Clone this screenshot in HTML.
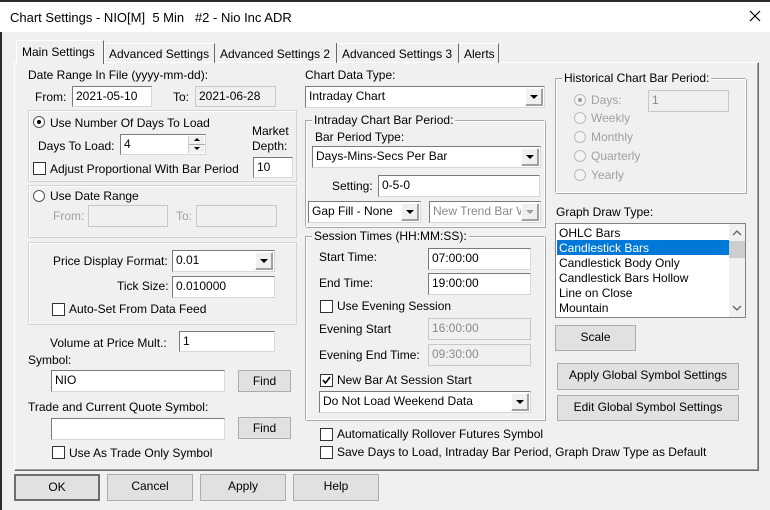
<!DOCTYPE html>
<html><head><meta charset="utf-8"><style>
*{box-sizing:border-box;margin:0;padding:0}
body{width:770px;height:510px;background:#f0f0f0;font-family:"Liberation Sans",sans-serif;font-size:12px;color:#000;position:relative;overflow:hidden}
.a{position:absolute;white-space:nowrap;line-height:14px}
.t{position:absolute;white-space:nowrap;line-height:14px}
.g{color:#a0a0a0}
.in{position:absolute;background:#fff;border:1px solid #7a7a7a;border-right-color:#d8d8d8;border-bottom-color:#d8d8d8;padding:2px 3px;line-height:15px;white-space:nowrap;overflow:hidden}
.dis{background:#f0f0f0;border-color:#c8c8c8;color:#8a8a8a}
.sel{position:absolute;background:#fff;border:1px solid #7a7a7a;border-right-color:#d8d8d8;border-bottom-color:#d8d8d8;padding:2px 3px;line-height:15px;white-space:nowrap;overflow:hidden}
.sel::after{content:"";position:absolute;right:1px;top:1px;bottom:1px;width:16px;background:#f0f0f0;border:1px solid #a0a0a0;border-top-color:#fff;border-left-color:#fff;box-shadow:inset -1px -1px 0 #a0a0a0}
.sel::before{content:"";position:absolute;right:6px;top:8px;border-left:4px solid transparent;border-right:4px solid transparent;border-top:4px solid #000;z-index:2}
.sel.dis::before{border-top-color:#a0a0a0}
.btn{position:absolute;background:#e1e1e1;border:1px solid #adadad;text-align:center;line-height:22px}
.grp{position:absolute;border:1px solid #d5d5d5;box-shadow:inset 1px 1px 0 #fff}
.grp2{position:absolute;border:1px solid #a8a8a8;border-right-color:#fff;border-bottom-color:#fff;box-shadow:1px 1px 0 #a8a8a8, inset 1px 1px 0 #fff}
.leg{position:absolute;background:#f0f0f0;padding:0 2px;line-height:14px;white-space:nowrap}
.cb{position:absolute;width:13px;height:13px;background:#fff;border:1px solid #333}
.rb{position:absolute;width:12px;height:12px;border-radius:50%;background:#fff;border:1px solid #555}
.rb.on::after{content:"";position:absolute;left:3px;top:3px;width:4px;height:4px;border-radius:50%;background:#000}
.rb.d{border-color:#bbb;background:#f4f4f4}
.rb.d.on::after{background:#999}
</style></head><body>
<div style="position:absolute;left:0;top:0;width:770px;height:2px;background:#2b2b2b"></div>
<div style="position:absolute;left:0;top:2px;width:770px;height:30px;background:#fff"></div>
<div style="position:absolute;left:0;top:32px;width:2px;height:478px;background:#2b2b2b"></div>
<div class="a" style="left:10px;top:10px;font-size:13px;line-height:15px">Chart Settings - NIO[M]&nbsp; 5 Min&nbsp;&nbsp; #2 - Nio Inc ADR</div>
<svg style="position:absolute;left:749px;top:10px" width="12" height="12"><path d="M1 1L11 11M11 1L1 11" stroke="#000" stroke-width="1.2"/></svg>

<!-- panel -->
<div style="position:absolute;left:14px;top:62px;width:745px;height:409px;border:1px solid #fff;border-right:1px solid #696969;border-bottom:1px solid #696969;box-shadow:inset -1px -1px 0 #a0a0a0"></div>
<!-- tabs -->
<div style="position:absolute;left:104px;top:43px;width:111px;height:20px;border:1px solid #fff;border-right-color:#696969;border-bottom:none"></div>
<div style="position:absolute;left:215px;top:43px;width:122px;height:20px;border-right:1px solid #696969;"></div>
<div style="position:absolute;left:337px;top:43px;width:122px;height:20px;border-right:1px solid #696969;border-top:1px solid #fff"></div>
<div style="position:absolute;left:459px;top:43px;width:40px;height:20px;border-right:1px solid #696969;border-top:1px solid #fff"></div>
<div style="position:absolute;left:16px;top:40px;width:88px;height:24px;background:#f0f0f0;border:1px solid #fff;border-right:1px solid #696969;border-bottom:none"></div>
<div class="a" style="left:22px;top:45px">Main Settings</div>
<div class="a" style="left:109px;top:47px">Advanced Settings</div>
<div class="a" style="left:220px;top:47px">Advanced Settings 2</div>
<div class="a" style="left:342px;top:47px">Advanced Settings 3</div>
<div class="a" style="left:464px;top:47px">Alerts</div>

<!-- left -->
<div class="a" style="left:28px;top:68px">Date Range In File (yyyy-mm-dd):</div>
<div class="a" style="left:35px;top:90px">From:</div>
<div class="in" style="left:72px;top:86px;width:80px;height:21px">2021-05-10</div>
<div class="a" style="left:173px;top:90px">To:</div>
<div class="in dis" style="left:195px;top:86px;width:81px;height:21px;color:#000">2021-06-28</div>

<div class="grp" style="left:28px;top:110px;width:269px;height:72px"></div>
<div class="rb on" style="left:33px;top:116px"></div>
<div class="a" style="left:50px;top:116px">Use Number Of Days To Load</div>
<div class="a" style="left:38px;top:139px">Days To Load:</div>
<div class="in" style="left:120px;top:134px;width:86px;height:21px">4</div>
<div style="position:absolute;left:188px;top:136px;width:16px;height:17px;background:#f0f0f0;border-left:1px solid #ccc"><div style="position:absolute;left:5px;top:2px;border-left:3px solid transparent;border-right:3px solid transparent;border-bottom:3px solid #000"></div><div style="position:absolute;left:0;top:8px;width:16px;height:1px;background:#aaa"></div><div style="position:absolute;left:5px;top:11px;border-left:3px solid transparent;border-right:3px solid transparent;border-top:3px solid #000"></div></div>
<div class="a" style="left:252px;top:124px">Market</div>
<div class="a" style="left:252px;top:139px">Depth:</div>
<div class="in" style="left:253px;top:157px;width:40px;height:21px">10</div>
<div class="cb" style="left:33px;top:162px"></div>
<div class="a" style="left:50px;top:162px">Adjust Proportional With Bar Period</div>

<div class="grp" style="left:28px;top:185px;width:269px;height:53px"></div>
<div class="rb" style="left:33px;top:190px"></div>
<div class="a" style="left:50px;top:189px">Use Date Range</div>
<div class="a g" style="left:53px;top:209px">From:</div>
<div class="in dis" style="left:88px;top:205px;width:80px;height:22px"></div>
<div class="a g" style="left:176px;top:209px">To:</div>
<div class="in dis" style="left:196px;top:205px;width:81px;height:22px"></div>

<div class="grp" style="left:28px;top:242px;width:269px;height:83px"></div>
<div class="a" style="left:53px;top:254px">Price Display Format:</div>
<div class="sel" style="left:172px;top:250px;width:103px;height:22px">0.01</div>
<div class="a" style="left:117px;top:279px">Tick Size:</div>
<div class="in" style="left:172px;top:276px;width:103px;height:22px">0.010000</div>
<div class="cb" style="left:52px;top:303px"></div>
<div class="a" style="left:69px;top:302px">Auto-Set From Data Feed</div>

<div class="a" style="left:50px;top:336px">Volume at Price Mult.:</div>
<div class="in" style="left:179px;top:331px;width:96px;height:21px">1</div>
<div class="a" style="left:28px;top:353px">Symbol:</div>
<div class="in" style="left:51px;top:370px;width:174px;height:22px">NIO</div>
<div class="btn" style="left:238px;top:370px;width:53px;height:22px;line-height:20px">Find</div>
<div class="a" style="left:28px;top:400px">Trade and Current Quote Symbol:</div>
<div class="in" style="left:51px;top:418px;width:174px;height:22px"></div>
<div class="btn" style="left:238px;top:417px;width:53px;height:22px;line-height:20px">Find</div>
<div class="cb" style="left:52px;top:446px"></div>
<div class="a" style="left:69px;top:446px">Use As Trade Only Symbol</div>

<!-- middle -->
<div class="a" style="left:305px;top:68px">Chart Data Type:</div>
<div class="sel" style="left:305px;top:86px;width:240px;height:22px">Intraday Chart</div>
<div class="grp2" style="left:305px;top:120px;width:240px;height:107px"></div>
<div class="leg" style="left:312px;top:113px">Intraday Chart Bar Period:</div>
<div class="a" style="left:315px;top:130px">Bar Period Type:</div>
<div class="sel" style="left:312px;top:146px;width:229px;height:22px">Days-Mins-Secs Per Bar</div>
<div class="a" style="left:332px;top:179px">Setting:</div>
<div class="in" style="left:378px;top:175px;width:162px;height:22px">0-5-0</div>
<div class="sel" style="left:308px;top:201px;width:113px;height:22px">Gap Fill - None</div>
<div class="sel dis" style="left:429px;top:201px;width:112px;height:22px;color:#8a8a8a">New Trend Bar W</div>
<div class="grp2" style="left:305px;top:236px;width:240px;height:184px"></div>
<div class="leg" style="left:312px;top:229px">Session Times (HH:MM:SS):</div>
<div class="a" style="left:319px;top:250px">Start Time:</div>
<div class="in" style="left:428px;top:248px;width:103px;height:22px">07:00:00</div>
<div class="a" style="left:319px;top:276px">End Time:</div>
<div class="in" style="left:428px;top:273px;width:103px;height:22px">19:00:00</div>
<div class="cb" style="left:320px;top:300px"></div>
<div class="a" style="left:337px;top:299px">Use Evening Session</div>
<div class="a" style="left:319px;top:322px">Evening Start</div>
<div class="in dis" style="left:428px;top:318px;width:103px;height:22px">16:00:00</div>
<div class="a" style="left:319px;top:348px">Evening End Time:</div>
<div class="in dis" style="left:428px;top:344px;width:103px;height:22px">09:30:00</div>
<div class="cb" style="left:320px;top:374px"><svg width="11" height="11" style="position:absolute;left:0;top:0"><path d="M2 5L4.5 8L9 2" stroke="#000" stroke-width="1.6" fill="none"/></svg></div>
<div class="a" style="left:337px;top:373px">New Bar At Session Start</div>
<div class="sel" style="left:319px;top:391px;width:212px;height:22px">Do Not Load Weekend Data</div>
<div class="cb" style="left:320px;top:428px"></div>
<div class="a" style="left:337px;top:427px">Automatically Rollover Futures Symbol</div>
<div class="cb" style="left:320px;top:446px"></div>
<div class="a" style="left:337px;top:445px">Save Days to Load, Intraday Bar Period, Graph Draw Type as Default</div>

<!-- right -->
<div class="grp2" style="left:555px;top:78px;width:191px;height:115px"></div>
<div class="leg" style="left:562px;top:71px">Historical Chart Bar Period:</div>
<div class="rb d on" style="left:574px;top:94px"></div>
<div class="a g" style="left:591px;top:93px">Days:</div>
<div class="in dis" style="left:648px;top:90px;width:81px;height:22px">1</div>
<div class="rb d" style="left:574px;top:112px"></div><div class="a g" style="left:591px;top:111px">Weekly</div>
<div class="rb d" style="left:574px;top:131px"></div><div class="a g" style="left:591px;top:130px">Monthly</div>
<div class="rb d" style="left:574px;top:150px"></div><div class="a g" style="left:591px;top:149px">Quarterly</div>
<div class="rb d" style="left:574px;top:169px"></div><div class="a g" style="left:591px;top:168px">Yearly</div>
<div class="a" style="left:556px;top:205px">Graph Draw Type:</div>
<div style="position:absolute;left:555px;top:223px;width:191px;height:95px;background:#fff;border:1px solid #828282;overflow:hidden">
<div class="a" style="left:3px;top:2px">OHLC Bars</div>
<div style="position:absolute;left:1px;top:16px;width:172px;height:15px;background:#0078d7"></div>
<div class="a" style="left:3px;top:17px;color:#fff">Candlestick Bars</div>
<div class="a" style="left:3px;top:32px">Candlestick Body Only</div>
<div class="a" style="left:3px;top:47px">Candlestick Bars Hollow</div>
<div class="a" style="left:3px;top:62px">Line on Close</div>
<div class="a" style="left:3px;top:77px">Mountain</div>
<div style="position:absolute;left:173px;top:0;width:17px;height:93px;background:#f0f0f0"></div>
<div style="position:absolute;left:173px;top:17px;width:16px;height:17px;background:#cdcdcd"></div>
<svg style="position:absolute;left:176px;top:5px" width="10" height="8"><path d="M1 6L5 2L9 6" stroke="#606060" stroke-width="1.3" fill="none"/></svg>
<svg style="position:absolute;left:176px;top:80px" width="10" height="8"><path d="M1 2L5 6L9 2" stroke="#606060" stroke-width="1.3" fill="none"/></svg>
</div>
<div class="btn" style="left:555px;top:325px;width:81px;height:26px">Scale</div>
<div class="btn" style="left:557px;top:363px;width:182px;height:27px">Apply Global Symbol Settings</div>
<div class="btn" style="left:557px;top:395px;width:182px;height:26px">Edit Global Symbol Settings</div>

<!-- bottom -->
<div class="btn" style="left:14px;top:474px;width:86px;height:27px;border:2px solid #6c6c6c;line-height:23px">OK</div>
<div class="btn" style="left:107px;top:474px;width:86px;height:27px">Cancel</div>
<div class="btn" style="left:200px;top:474px;width:86px;height:27px">Apply</div>
<div class="btn" style="left:293px;top:474px;width:86px;height:27px">Help</div>
</body></html>
